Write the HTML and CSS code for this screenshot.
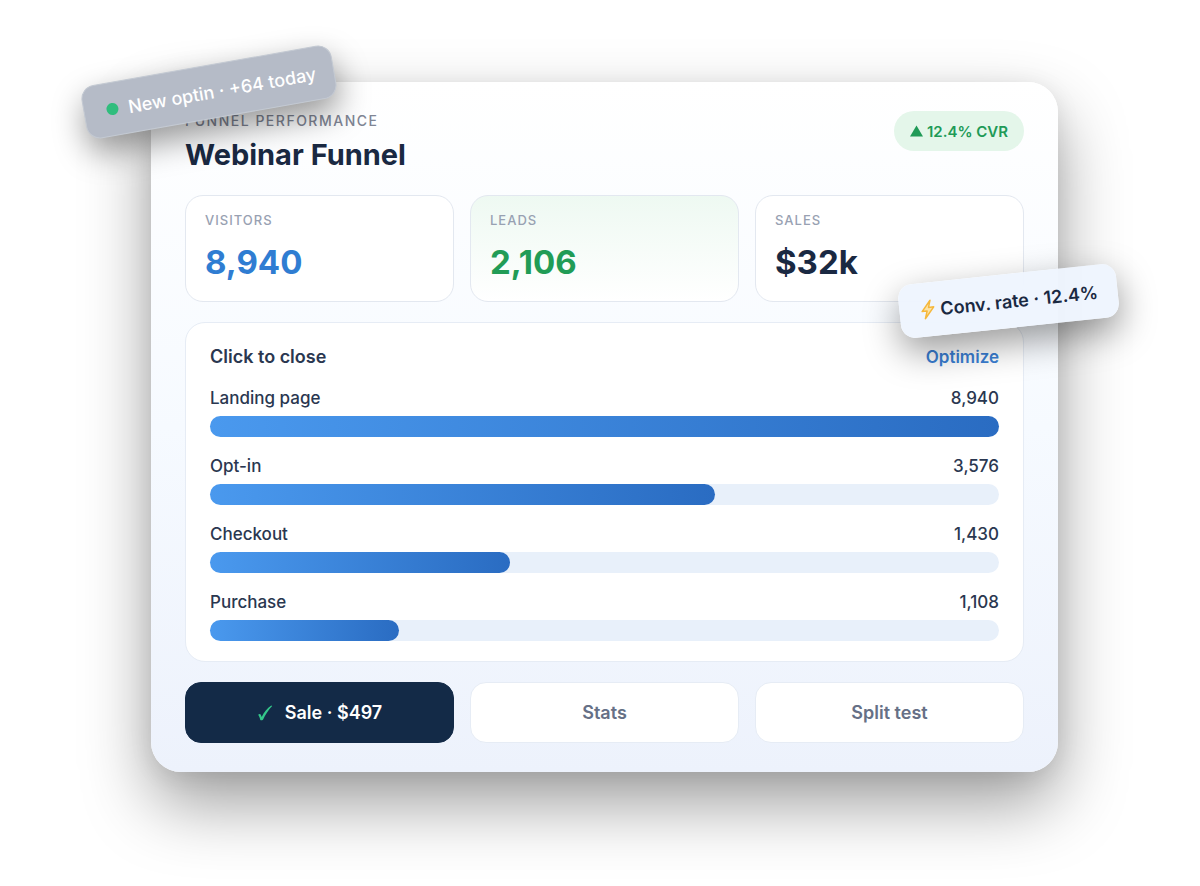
FILE: index.html
```
<!DOCTYPE html>
<html lang="en">
<head>
  <title>Webinar Funnel</title>
  <meta charset="UTF-8">
  <meta name="viewport" content="width=device-width, initial-scale=1.0">
  <link rel="stylesheet" href="styles.css">
</head>
<body>
  <main class="stage">
    <section class="card">
      <header class="card-header">
        <div>
          <p class="eyebrow">Funnel performance</p>
          <h1>Webinar Funnel</h1>
        </div>
        <span class="badge">
          <svg width="13" height="12" viewBox="0 0 13 12" aria-hidden="true"><path d="M6.500 0.500 13 11.500H0z" fill="currentColor"/></svg>
          12.4% CVR
        </span>
      </header>

      <div class="stats">
        <div class="stat">
          <p class="stat-label">Visitors</p>
          <p class="stat-value blue">8,940</p>
        </div>
        <div class="stat stat-leads">
          <p class="stat-label">Leads</p>
          <p class="stat-value green">2,106</p>
        </div>
        <div class="stat">
          <p class="stat-label">Sales</p>
          <p class="stat-value">$32k</p>
        </div>
      </div>

      <section class="panel">
        <div class="panel-header">
          <h2>Click to close</h2>
          <a href="#">Optimize</a>
        </div>
        <div class="step">
          <div class="step-text"><span>Landing page</span><span>8,940</span></div>
          <div class="track"><div class="bar" style="width: 100%"></div></div>
        </div>
        <div class="step">
          <div class="step-text"><span>Opt-in</span><span>3,576</span></div>
          <div class="track"><div class="bar" style="width: 64%"></div></div>
        </div>
        <div class="step">
          <div class="step-text"><span>Checkout</span><span>1,430</span></div>
          <div class="track"><div class="bar" style="width: 38%"></div></div>
        </div>
        <div class="step">
          <div class="step-text"><span>Purchase</span><span>1,108</span></div>
          <div class="track"><div class="bar" style="width: 24%"></div></div>
        </div>
      </section>

      <div class="actions">
        <button type="button" class="btn btn-dark">
          <svg width="16" height="16" viewBox="0 0 16 16" aria-hidden="true"><path d="M1.200 9.800c.9-.9 2.200-1 2.700.1l.8 2C7 7.600 10.200 3 14.200.6l1 .3C11.400 4.800 8.300 9.500 6 14.700c-.8.6-2 .8-2.700.4C2.900 13.200 2.200 11.200 1.200 9.800z" fill="#34c78a"/></svg>
          Sale · $497
        </button>
        <button type="button" class="btn">Stats</button>
        <button type="button" class="btn">Split test</button>
      </div>

      <div class="tag tag-optin"><span class="dot"></span>New optin · +64 today</div>
      <div class="tag tag-rate">
        <svg width="15" height="20" viewBox="0 0 15 20" aria-hidden="true"><path d="M10.500 1 1.500 11.500h5L4 19l9.500-11H8.300z" fill="#fde3a4" stroke="#f5b83d" stroke-width="1.500" stroke-linejoin="round"/></svg>
        Conv. rate · 12.4%
      </div>
    </section>
  </main>
</body>
</html>
```
FILE: styles.css
```
* {
  box-sizing: border-box;
}
body {
  margin: 0;
  background: #fff;
  color: #1a2942;
  font-family: Inter, "Liberation Sans", sans-serif;
}
h1, h2, p {
  margin: 0;
}
.stage {
  padding: 82px 142px 115px 151px;
}
.card {
  position: relative;
  padding: 29px 34px;
  border-radius: 30px;
  background: linear-gradient(180deg, #fff 0%, #f6faff 50%, #edf2fc 100%);
  box-shadow: 0 32px 68px rgba(0, 0, 0, 0.38), 0 4px 24px rgba(0, 0, 0, 0.08);
}
.card-header {
  display: flex;
  justify-content: space-between;
  align-items: flex-start;
  margin-bottom: 22px;
}
.eyebrow {
  font-size: 14px;
  line-height: 20px;
  font-weight: 500;
  letter-spacing: 1.5px;
  text-transform: uppercase;
  color: #7f8594;
}
h1 {
  margin-top: 6px;
  font-size: 29px;
  line-height: 36px;
  font-weight: 700;
}
.badge {
  display: flex;
  align-items: center;
  gap: 4px;
  height: 40px;
  padding: 0 16px;
  border-radius: 20px;
  background: #e4f6ea;
  color: #209a57;
  font-size: 15px;
  font-weight: 600;
}
.stats,
.actions {
  display: grid;
  grid-template-columns: repeat(3, 1fr);
  gap: 16px;
}
.stat {
  padding: 15px 19px 19px;
  border: 1px solid #e3e8f0;
  border-radius: 18px;
  background: #fff;
}
.stat-leads {
  background: linear-gradient(180deg, #eef9f2, #fff);
}
.stat-label {
  margin-bottom: 13px;
  font-size: 13px;
  line-height: 18px;
  font-weight: 500;
  letter-spacing: 1px;
  text-transform: uppercase;
  color: #98a1b2;
}
.stat-value {
  font-size: 33px;
  line-height: 40px;
  font-weight: 700;
}
.blue {
  color: #2f7dd2;
}
.green {
  color: #219c56;
}
.panel {
  display: flex;
  flex-direction: column;
  gap: 17px;
  margin: 20px 0;
  padding: 22px 24px 20px;
  border: 1px solid #e6ecf5;
  border-radius: 20px;
  background: #fff;
}
.panel-header,
.step-text {
  display: flex;
  justify-content: space-between;
  line-height: 24px;
}
h2 {
  font-size: 18px;
  font-weight: 600;
  line-height: 24px;
  color: #2a3750;
}
.panel-header a {
  font-size: 17px;
  font-weight: 600;
  color: #3a7fd4;
  text-decoration: none;
}
.step-text {
  margin-bottom: 6px;
  font-size: 17px;
  font-weight: 500;
  color: #2a3750;
}
.track {
  height: 21px;
  border-radius: 11px;
  background: #e8f0fa;
}
.bar {
  height: 100%;
  border-radius: 11px;
  background: linear-gradient(90deg, #4a99ee, #2a6cc2);
}
.btn {
  display: flex;
  align-items: center;
  justify-content: center;
  gap: 12px;
  height: 61px;
  border: 1px solid #e6ecf5;
  border-radius: 16px;
  background: #fff;
  color: #667086;
  font-family: inherit;
  font-size: 18px;
  font-weight: 600;
  cursor: pointer;
}
.btn-dark {
  border-color: #132a47;
  background: #132a47;
  color: #fff;
}
.tag {
  position: absolute;
  display: flex;
  align-items: center;
  height: 54px;
  border-radius: 14px;
  font-size: 18px;
  white-space: nowrap;
}
.tag svg,
.dot {
  flex-shrink: 0;
}
.tag-optin {
  top: -17px;
  left: -69px;
  gap: 10px;
  width: 254px;
  padding: 0 22px;
  border: 1px solid #c3c9d2;
  background: #b5bbc7;
  box-shadow: 0 14px 32px rgba(0, 0, 0, 0.4);
  color: #fff;
  font-weight: 500;
  transform: rotate(-10deg);
}
.dot {
  width: 12px;
  height: 12px;
  border-radius: 50%;
  background: #30bd7d;
}
.tag-rate {
  top: 192px;
  right: -60px;
  gap: 5px;
  width: 219px;
  padding: 0 21px;
  background: rgba(238, 245, 254, 0.96);
  box-shadow: 0 14px 36px rgba(0, 0, 0, 0.4);
  font-weight: 600;
  transform: rotate(-6deg);
}
```
